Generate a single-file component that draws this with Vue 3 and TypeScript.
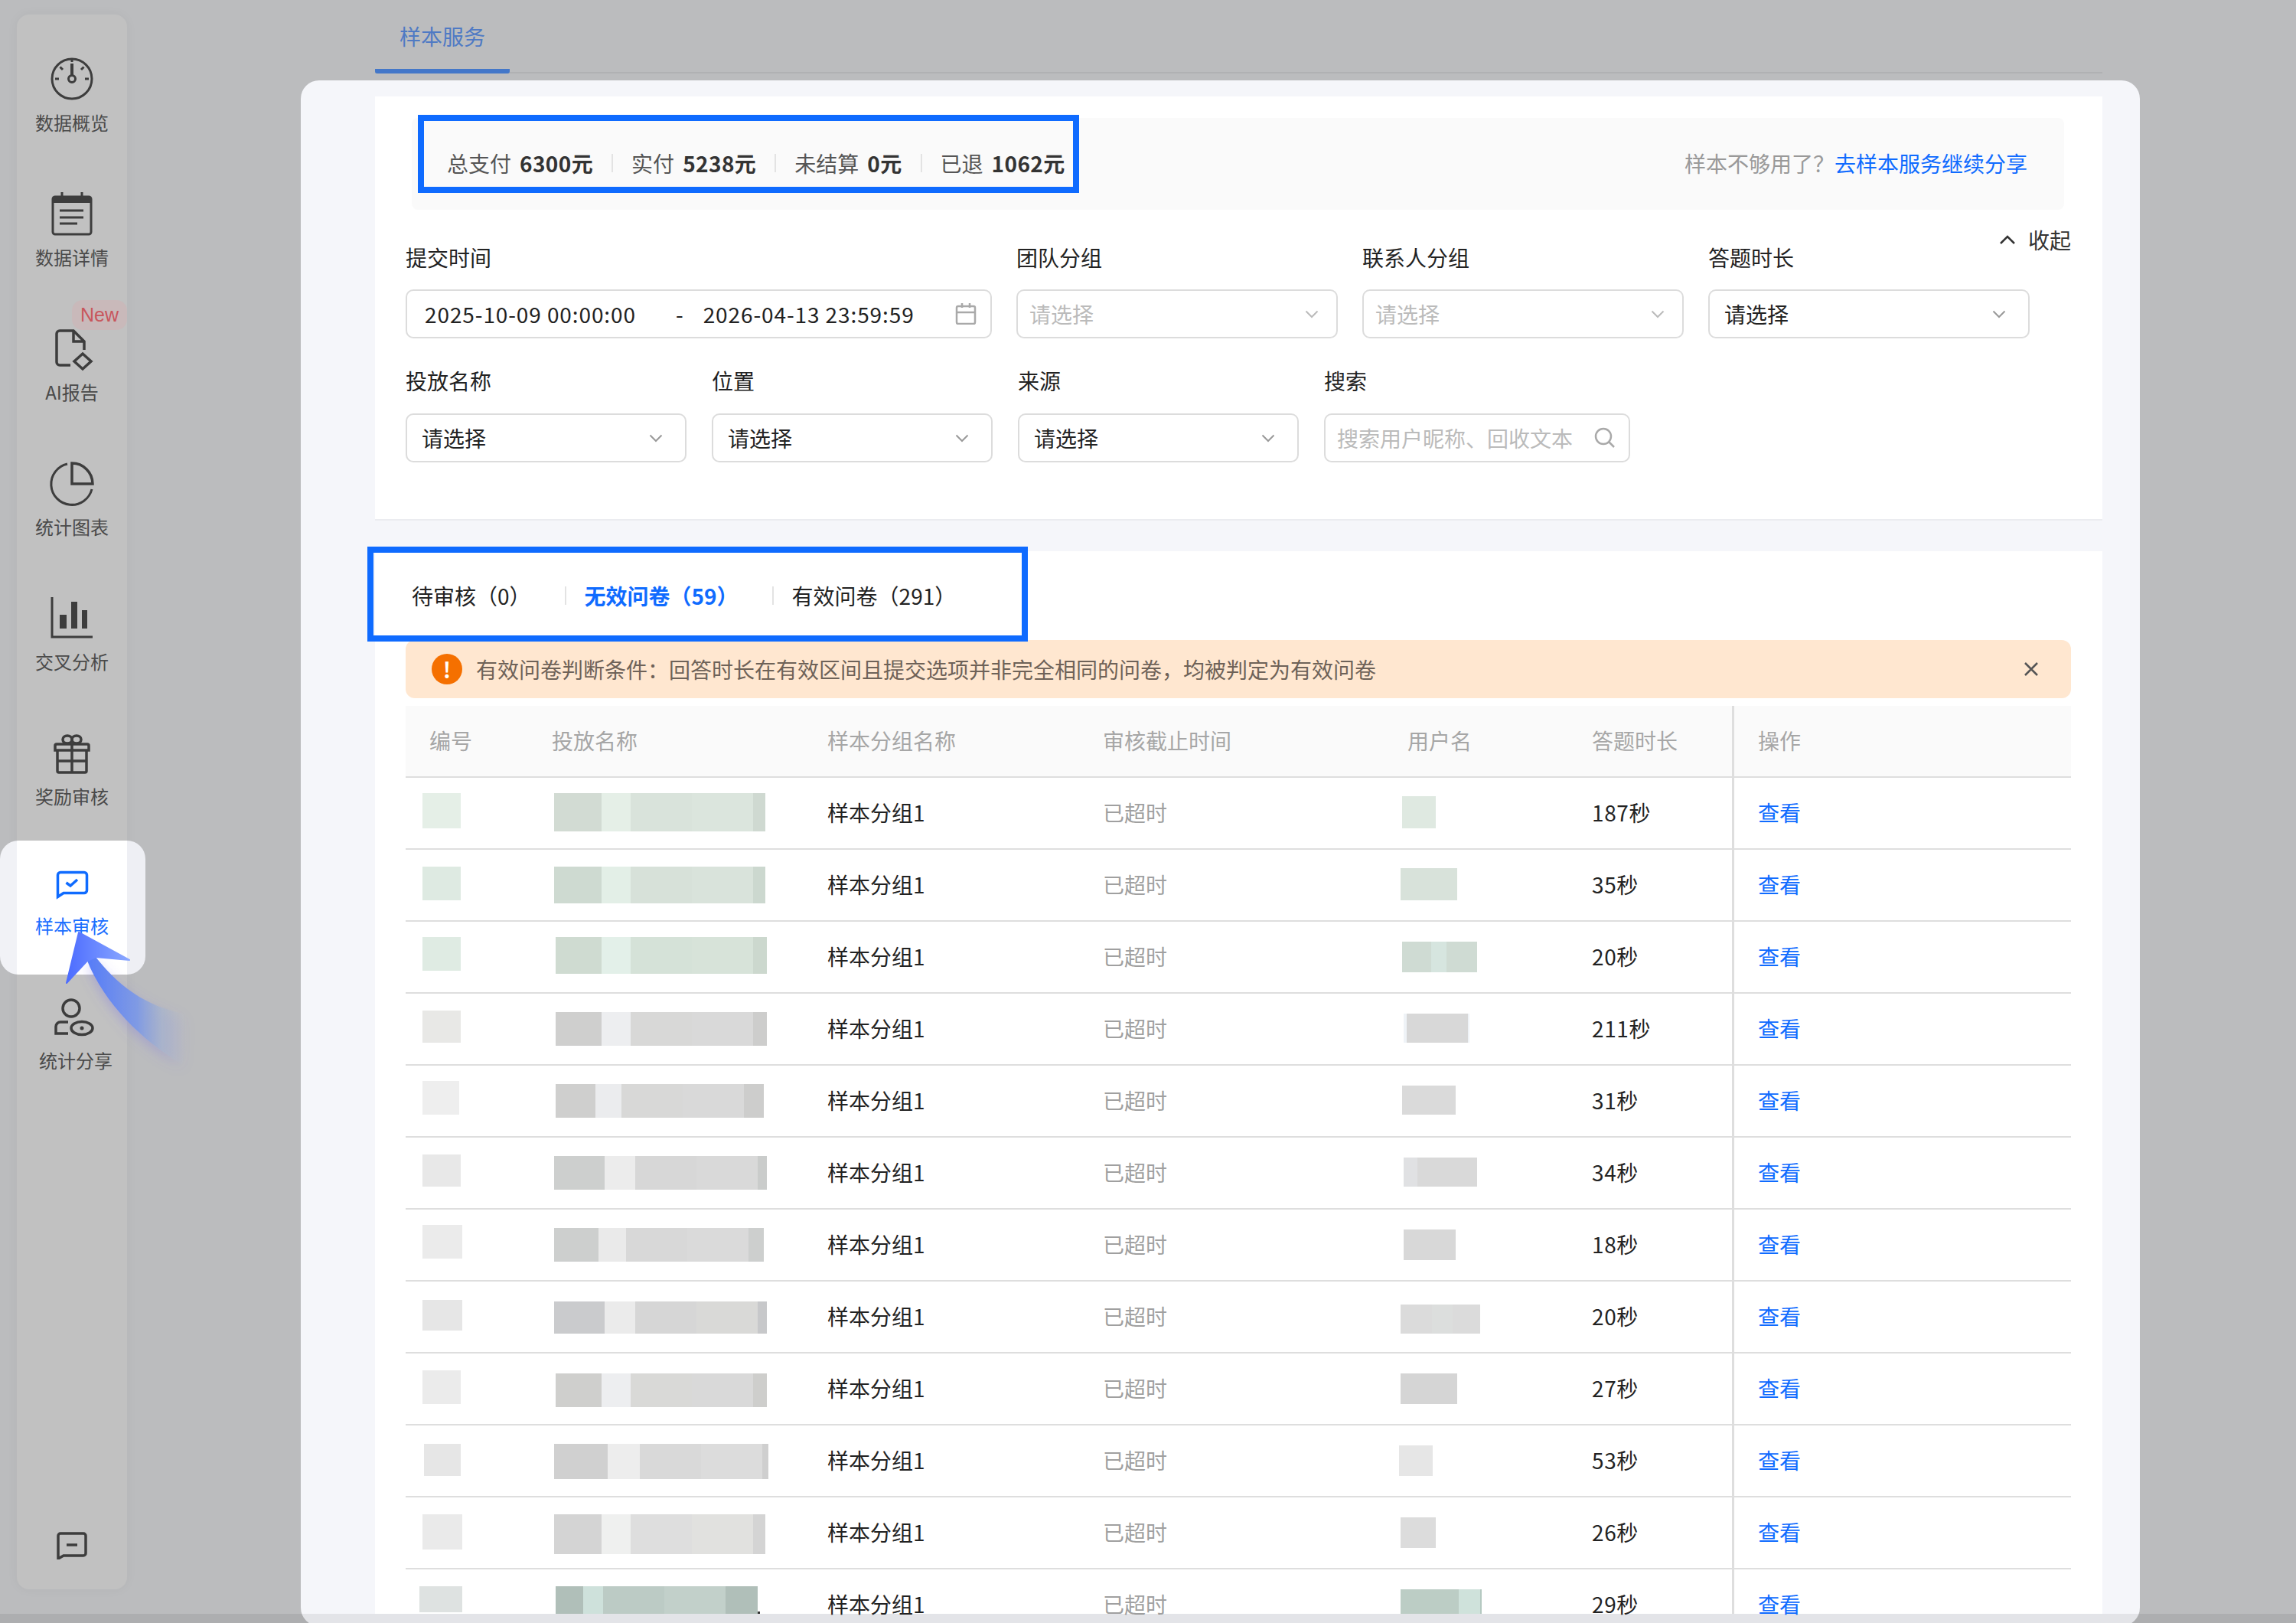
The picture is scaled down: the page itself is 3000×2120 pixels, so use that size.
<script setup lang="ts">
type Block = { ml: number; top: number; h: number; segs: [number, string][] }
type Row = { id: Block; name: Block; user: Block; time: string }

const block = (ml: number, top: number, h: number, ...segs: [number, string][]): Block => ({ ml, top, h, segs })
const five = (w: number[], c: string[]) => w.map((x, i) => [x, c[i]] as [number, string])

const rows: Row[] = [
  {
    id: block(22, 20, 46, [50, '#e5efe7']),
    name: block(35, 20, 50, ...five([62, 38, 80, 80, 16], ['#d2dbd3', '#e5efe7', '#d9e3db', '#dbe5dd', '#cfd9d1'])),
    user: block(24, 24, 42, [44, '#dfe9e1']),
    time: '187秒',
  },
  {
    id: block(22, 22, 44, [50, '#deeae2']),
    name: block(35, 22, 48, ...five([62, 38, 80, 80, 16], ['#cedad1', '#e3efe7', '#d7e1d9', '#d9e3db', '#ccd8cf'])),
    user: block(22, 24, 42, [74, '#d8e2da']),
    time: '35秒',
  },
  {
    id: block(22, 20, 44, [50, '#dfebe3']),
    name: block(37, 20, 48, ...five([60, 38, 80, 80, 18], ['#cfdbd1', '#e3f0e9', '#d5e2d8', '#d7e3d9', '#ccd8ce'])),
    user: block(24, 26, 40, [38, '#cfdbd3'], [20, '#d6e5df'], [40, '#cfdbd3']),
    time: '20秒',
  },
  {
    id: block(22, 22, 42, [50, '#e8e8e6']),
    name: block(37, 24, 44, ...five([60, 38, 80, 80, 18], ['#cfcfce', '#edeef0', '#d8d8d7', '#d9d9d9', '#cdcdcc'])),
    user: block(26, 26, 38, [4, '#eff3f7'], [80, '#d8d8d8'], [2, '#eff3f7']),
    time: '211秒',
  },
  {
    id: block(22, 20, 44, [48, '#eeeeee']),
    name: block(37, 24, 44, ...five([52, 34, 80, 80, 26], ['#cfcfce', '#ebecee', '#d8d8d7', '#d9d9d9', '#cdcdcc'])),
    user: block(24, 26, 38, [70, '#dadada']),
    time: '31秒',
  },
  {
    id: block(22, 22, 42, [50, '#e8e8e8']),
    name: block(35, 24, 44, ...five([66, 40, 80, 80, 12], ['#cdcfce', '#ececec', '#d7d7d7', '#d9d9d9', '#cacccb'])),
    user: block(26, 26, 38, [18, '#e0e1e3'], [78, '#d9d9d9']),
    time: '34秒',
  },
  {
    id: block(22, 20, 44, [52, '#ebebeb']),
    name: block(35, 24, 44, ...five([58, 36, 80, 80, 20], ['#cdcfce', '#eaeaea', '#d8d8d8', '#dadada', '#cdcfce'])),
    user: block(26, 26, 40, [68, '#d8d8d8']),
    time: '18秒',
  },
  {
    id: block(22, 24, 40, [52, '#e6e6e6']),
    name: block(35, 26, 42, ...five([66, 40, 80, 80, 12], ['#cacbcd', '#ebebeb', '#d6d6d6', '#d9d9d7', '#c7c8ca'])),
    user: block(22, 30, 38, [41, '#dbdbdb'], [27, '#dcdedd'], [36, '#dbdbdb']),
    time: '20秒',
  },
  {
    id: block(22, 22, 44, [50, '#ebebeb']),
    name: block(37, 26, 44, ...five([60, 38, 80, 80, 18], ['#cfcfcd', '#edeef0', '#d9d9d7', '#d9d9d9', '#cececc'])),
    user: block(22, 26, 40, [74, '#d5d5d5']),
    time: '27秒',
  },
  {
    id: block(24, 24, 42, [48, '#e6e6e6']),
    name: block(35, 24, 46, ...five([70, 42, 80, 80, 8], ['#d0d0d0', '#ededed', '#d9d9d9', '#dcdcdc', '#cfcfcf'])),
    user: block(20, 26, 40, [44, '#e6e6e6']),
    time: '53秒',
  },
  {
    id: block(22, 22, 46, [52, '#eaeaea']),
    name: block(35, 22, 52, ...five([62, 38, 80, 80, 16], ['#d4d4d4', '#eff0ef', '#dedede', '#e1e1df', '#d4d4d4'])),
    user: block(22, 26, 40, [46, '#dcdcdc']),
    time: '26秒',
  },
  {
    id: block(18, 22, 34, [56, '#dee2e1']),
    name: block(37, 22, 36, ...five([36, 26, 80, 80, 42], ['#b0bfb9', '#cee1db', '#bccbc5', '#c2d0ca', '#b0bfb9'])),
    user: block(22, 26, 32, [76, '#bccdc5'], [28, '#cfe2db'], [2, '#b5c9c1']),
    time: '29秒',
  },
]

const stats = [
  { label: '总支付', value: '6300元' },
  { label: '实付', value: '5238元' },
  { label: '未结算', value: '0元' },
  { label: '已退', value: '1062元' },
]

const firstRow = [
  { label: '团队分组', text: '请选择', empty: true },
  { label: '联系人分组', text: '请选择', empty: true },
  { label: '答题时长', text: '请选择', empty: false },
]

const secondRow = ['投放名称', '位置', '来源']
const heads = ['编号', '投放名称', '样本分组名称', '审核截止时间', '用户名', '答题时长', '操作']

const blockStyle = (b: Block) => ({
  marginLeft: b.ml + 'px',
  marginTop: b.top + 'px',
  height: b.h + 'px',
})
</script>

<template>
  <div class="page">
    <aside class="side">
      <div class="nav-item">
        <svg class="nav-icon" viewBox="0 0 56 56" fill="none" stroke="#3d3d3d" stroke-width="3">
          <circle cx="28" cy="28" r="26" />
          <path d="M6 28h5M45 28h5M12.500 12.500l3.500 3.500M43.500 12.500l-3.500 3.500M28 2v4" />
          <path d="M28 8v15" stroke-width="4" />
          <circle cx="28" cy="28" r="4.500" />
        </svg>
        <span>数据概览</span>
      </div>
      <div class="nav-item">
        <svg class="nav-icon" viewBox="0 0 56 56" fill="none" stroke="#3d3d3d" stroke-width="3">
          <rect x="3" y="6" width="50" height="49" rx="3" />
          <rect x="3" y="6" width="50" height="8" fill="#3d3d3d" stroke="none" />
          <path d="M15 0v9M41 0v9M12 24h31M12 33h31M12 41h23" />
        </svg>
        <span>数据详情</span>
      </div>
      <div class="nav-item">
        <em class="badge">New</em>
        <svg class="nav-icon" viewBox="0 0 56 56" fill="none" stroke="#3d3d3d" stroke-width="3.500">
          <path d="M26 50H12a4 4 0 0 1-4-4V9a4 4 0 0 1 4-4h18l14 14v11" />
          <path d="M30 5v14h14" />
          <path d="M42 35l11 10-11 10-11-10z" />
        </svg>
        <span>AI报告</span>
      </div>
      <div class="nav-item">
        <svg class="nav-icon" viewBox="0 0 56 56" fill="none" stroke="#3d3d3d" stroke-width="3.500">
          <path d="M22 3a27 27 0 1 0 32 33" stroke-width="3" />
          <path d="M28 2a27 27 0 0 1 27 27H28z" />
        </svg>
        <span>统计图表</span>
      </div>
      <div class="nav-item">
        <svg class="nav-icon" viewBox="0 0 56 56" fill="none" stroke="#3d3d3d" stroke-width="3">
          <path d="M2 1v52h53" />
          <path d="M12 24h9v18h-9zM27 7h8v35h-8zM41 18h7v24h-7z" fill="#3d3d3d" stroke="none" />
        </svg>
        <span>交叉分析</span>
      </div>
      <div class="nav-item">
        <svg class="nav-icon" viewBox="0 0 56 56" fill="none" stroke="#3d3d3d" stroke-width="3.500">
          <g transform="translate(0 3)">
            <ellipse cx="22" cy="8" rx="6" ry="5" />
            <ellipse cx="34" cy="8" rx="6" ry="5" />
            <path d="M6 22v-6a2 2 0 0 1 2-2h40a2 2 0 0 1 2 2v6z" />
            <path d="M9 22v27a2 2 0 0 0 2 2h34a2 2 0 0 0 2-2V22M28 14v37M9 36h38" />
          </g>
        </svg>
        <span>奖励审核</span>
      </div>
      <div class="nav-item active">
        <svg class="nav-icon" viewBox="0 0 56 56" fill="none" stroke="#0f6bff" stroke-width="3.500">
          <path d="M9.500 16a3.500 3.500 0 0 1 3.500-3.500h31a3.500 3.500 0 0 1 3.500 3.500v20a3.500 3.500 0 0 1-3.500 3.500H17l-7.500 5z" />
          <path d="M20.500 26l5.500 4 9-8" />
        </svg>
        <span>样本审核</span>
      </div>
      <div class="nav-item share">
        <svg class="nav-icon" viewBox="0 0 56 56" fill="none" stroke="#3d3d3d" stroke-width="3.500">
          <circle cx="22" cy="17" r="11" />
          <path d="M18 35H8a6 6 0 0 0-6 6v9h16" />
          <ellipse cx="36" cy="43" rx="14" ry="8.500" />
          <circle cx="36" cy="43" r="2.500" fill="#3d3d3d" stroke="none" />
        </svg>
        <span>统计分享</span>
      </div>
      <svg class="feedback" viewBox="0 0 40 36" fill="none" stroke="#3d3d3d" stroke-width="3.500">
        <path d="M2 5a3 3 0 0 1 3-3h30a3 3 0 0 1 3 3v23a3 3 0 0 1-3 3H9l-7 4z" />
        <path d="M13 17h14" />
      </svg>
    </aside>

    <main class="main">
      <div class="tabbar">
        <div class="tab">样本服务</div>
      </div>

      <div class="card">
        <section class="panel-top">
          <div class="stats">
            <div class="stat-list">
              <template v-for="(s, i) in stats" :key="s.label">
                <i v-if="i > 0" class="stat-sep"></i>
                <span class="stat-label">{{ s.label }}</span>
                <b class="stat-value">{{ s.value }}</b>
              </template>
              <div class="mark mark-stats"></div>
            </div>
            <div class="more">样本不够用了？<a>去样本服务继续分享</a></div>
          </div>

          <button class="fold">
            <svg width="22" height="14" viewBox="0 0 22 14" fill="none" stroke="#333" stroke-width="2.500"><path d="M2 12l9-9 9 9" /></svg>
            收起
          </button>

          <div class="filters">
            <div class="field field-date">
              <label>提交时间</label>
              <div class="control date">
                <span class="date-from">2025-10-09 00:00:00</span>
                <span class="date-dash">-</span>
                <span class="date-to">2026-04-13 23:59:59</span>
                <svg class="cal" width="28" height="28" viewBox="0 0 28 28" fill="none" stroke="#a9a9a9" stroke-width="2.500">
                  <rect x="2" y="4" width="24" height="23" rx="2" />
                  <path d="M2 12h24M9 0v6M19 0v6" />
                </svg>
              </div>
            </div>
            <div v-for="f in firstRow" :key="f.label" class="field field-select">
              <label>{{ f.label }}</label>
              <div class="control select" :class="{ empty: f.empty }">
                <span>{{ f.text }}</span>
                <svg width="18" height="11" viewBox="0 0 18 11" fill="none" stroke-width="2"><path d="M1.500 1.500L9 9l7.500-7.500" /></svg>
              </div>
            </div>
          </div>

          <div class="filters second">
            <div v-for="l in secondRow" :key="l" class="field field-small">
              <label>{{ l }}</label>
              <div class="control select">
                <span>请选择</span>
                <svg width="18" height="11" viewBox="0 0 18 11" fill="none" stroke-width="2"><path d="M1.500 1.500L9 9l7.500-7.500" /></svg>
              </div>
            </div>
            <div class="field field-search">
              <label>搜索</label>
              <div class="control search">
                <span>搜索用户昵称、回收文本</span>
                <svg width="28" height="28" viewBox="0 0 28 28" fill="none" stroke="#a9a9a9" stroke-width="2.500">
                  <circle cx="12" cy="12" r="10" />
                  <path d="M19 19l7 7" />
                </svg>
              </div>
            </div>
          </div>
        </section>

        <section class="panel-list">
          <div class="status-tabs">
            <span class="status">待审核（0）</span>
            <i class="status-sep"></i>
            <span class="status on">无效问卷（59）</span>
            <i class="status-sep"></i>
            <span class="status">有效问卷（291）</span>
            <div class="mark mark-status"></div>
          </div>

          <div class="alert">
            <span class="alert-dot">!</span>
            <span class="alert-text">有效问卷判断条件：回答时长在有效区间且提交选项并非完全相同的问卷，均被判定为有效问卷</span>
            <svg class="alert-close" width="20" height="20" viewBox="0 0 20 20" fill="none" stroke="#555" stroke-width="2.500"><path d="M2 2l16 16M18 2L2 18" /></svg>
          </div>

          <div class="table">
            <div class="tr thead">
              <div v-for="h in heads" :key="h" class="td">{{ h }}</div>
            </div>
            <div v-for="(r, i) in rows" :key="i" class="tr">
              <div class="td">
                <div class="mosaic" :style="blockStyle(r.id)">
                  <i v-for="(s, n) in r.id.segs" :key="n" :style="{ width: s[0] + 'px', background: s[1] }"></i>
                </div>
              </div>
              <div class="td">
                <div class="mosaic" :style="blockStyle(r.name)">
                  <i v-for="(s, n) in r.name.segs" :key="n" :style="{ width: s[0] + 'px', background: s[1] }"></i>
                </div>
                <span v-if="i === rows.length - 1" class="tail-dot"></span>
              </div>
              <div class="td text">样本分组1</div>
              <div class="td text muted">已超时</div>
              <div class="td">
                <div class="mosaic" :style="blockStyle(r.user)">
                  <i v-for="(s, n) in r.user.segs" :key="n" :style="{ width: s[0] + 'px', background: s[1] }"></i>
                </div>
              </div>
              <div class="td text num">{{ r.time }}</div>
              <div class="td text link">查看</div>
            </div>
          </div>
        </section>
      </div>
    </main>

    <svg class="guide" width="270" height="210" viewBox="0 0 270 210" fill="none">
      <defs>
        <linearGradient id="guide-head" x1="87" y1="0" x2="169" y2="0" gradientUnits="userSpaceOnUse">
          <stop offset="0" stop-color="#4c6cff" />
          <stop offset="1" stop-color="#8ba8ff" />
        </linearGradient>
        <linearGradient id="guide-tail" x1="114" y1="0" x2="244" y2="0" gradientUnits="userSpaceOnUse">
          <stop offset="0" stop-color="#567cf8" />
          <stop offset="0.5" stop-color="#7f9ae4" />
          <stop offset="0.75" stop-color="#a7b4cc" stop-opacity="0.75" />
          <stop offset="1" stop-color="#b4b9c6" stop-opacity="0" />
        </linearGradient>
        <filter id="guide-glow" x="-30%" y="-30%" width="160%" height="160%">
          <feDropShadow dx="0" dy="6" stdDeviation="8" flood-color="#6a5ff0" flood-opacity="0.3" />
        </filter>
      </defs>
      <path d="M114 55C136 110 186 160 238 190L250 126C200 118 160 95 125 50z" fill="url(#guide-tail)" filter="url(#guide-glow)" />
      <path d="M103 18L169 54 125 50 114 55 87 84z" fill="url(#guide-head)" stroke="url(#guide-head)" stroke-width="2" stroke-linejoin="round" />
    </svg>

    <div class="bottom-band"></div>
  </div>
</template>

<style scoped>
.page {
  position: relative;
  display: flex;
  width: 3000px;
  height: 2120px;
  overflow: hidden;
  background: #bbbcbe;
  font-family: "Noto Sans CJK SC", "Noto Sans", sans-serif;
  font-size: 28px;
  color: #222;
}

.side {
  display: flex;
  flex-direction: column;
  flex: none;
  box-sizing: border-box;
  width: 144px;
  height: 2057px;
  margin: 19px 0 0 22px;
  padding: 56px 0 39px;
  border-radius: 16px;
  background: #c1c1c1;
  box-shadow: 0 0 16px rgba(0, 0, 0, 0.04);
}

.nav-item {
  position: relative;
  z-index: 1;
  display: flex;
  flex-direction: column;
  align-items: center;
  gap: 11px;
  flex: none;
  height: 176px;
  font-size: 24px;
  line-height: 36px;
  color: #4a4a4a;
}

.nav-icon {
  display: block;
  width: 56px;
  height: 56px;
  overflow: visible;
}

.nav-item.active {
  gap: 8px;
  height: 173px;
  margin-top: -4px;
  color: #1b6fff;
}

.nav-item.active::before {
  content: "";
  position: absolute;
  top: -29px;
  left: -22px;
  z-index: -1;
  width: 190px;
  height: 175px;
  border-radius: 24px;
  background: linear-gradient(to right, #f1f2f6 22px, #fff 22px, #fff 166px, #eeeff4 166px);
}

.nav-item.share {
  left: 5px;
}

.badge {
  position: absolute;
  top: -35px;
  right: 0;
  width: 72px;
  height: 39px;
  border-radius: 14px;
  background: #c9b9ba;
  font-family: "Liberation Sans", sans-serif;
  font-size: 25px;
  font-style: normal;
  line-height: 39px;
  text-align: center;
  color: #c8565c;
}

.feedback {
  display: block;
  width: 40px;
  height: 36px;
  margin: auto 0 0 52px;
}

.main {
  display: flex;
  flex-direction: column;
  flex: none;
  width: 2403px;
  margin-left: 227px;
}

.tabbar {
  box-sizing: border-box;
  height: 96px;
  margin: 0 49px 9px 97px;
  border-bottom: 2px solid #b0b1b3;
}

.tab {
  box-sizing: border-box;
  width: 176px;
  height: 96px;
  padding-left: 32px;
  border-bottom: 6px solid #4377c9;
  border-radius: 0 0 3px 3px;
  line-height: 94px;
  color: #4f7ac4;
}

.card {
  display: flex;
  flex-direction: column;
  box-sizing: border-box;
  height: 2019px;
  padding: 21px 49px 16px 97px;
  border-radius: 24px;
  background: #f5f6fa;
}

.panel-top {
  position: relative;
  flex: none;
  box-sizing: border-box;
  height: 554px;
  padding: 28px 50px 0 48px;
  border-bottom: 2px solid #ebecf0;
  background: #fff;
}

.stats {
  display: flex;
  align-items: center;
  justify-content: space-between;
  box-sizing: border-box;
  height: 120px;
  padding: 0 48px 3px 46px;
  border-radius: 8px;
  background: #fafafa;
}

.stat-list {
  display: flex;
  align-items: center;
  line-height: 40px;
  color: #555;
}

.stat-value {
  margin: 0 24px 0 11px;
  font-weight: 700;
  letter-spacing: 0.4px;
  color: #333;
}

.stat-sep {
  width: 2px;
  height: 24px;
  margin-right: 24px;
  background: #e3e3e3;
}

.mark {
  position: absolute;
  box-sizing: border-box;
  border: 8px solid #0f6bff;
  pointer-events: none;
}

.mark-stats {
  top: 24px;
  left: 56px;
  width: 864px;
  height: 102px;
}

.more {
  color: #999;
}

.more a {
  color: #0f6bff;
}

.fold {
  position: absolute;
  top: 167px;
  right: 41px;
  display: flex;
  align-items: center;
  gap: 16px;
  padding: 0;
  border: 0;
  background: none;
  font: inherit;
  line-height: 40px;
  color: #333;
}

.filters {
  display: flex;
  gap: 32px;
  margin: 43px 0 0 -8px;
}

.filters.second {
  gap: 33px;
  margin-top: 36px;
}

.field label {
  display: block;
  height: 40px;
  margin-bottom: 21px;
  line-height: 38px;
  color: #222;
}

.second .field label {
  margin-bottom: 22px;
}

.field-date {
  width: 766px;
}

.field-select {
  width: 420px;
}

.field-small {
  width: 367px;
}

.field-search {
  width: 400px;
}

.control {
  display: flex;
  align-items: center;
  box-sizing: border-box;
  height: 64px;
  border: 2px solid #dcdcdc;
  border-radius: 10px;
  background: #fff;
  line-height: 40px;
}

.date {
  padding: 0 18px 0 23px;
}

.date-from,
.date-to {
  letter-spacing: 0.9px;
}

.date-dash {
  margin: 0 26px 0 52px;
}

.cal {
  margin-left: auto;
}

.select {
  justify-content: space-between;
  padding: 0 29px 0 19px;
}

.select svg {
  stroke: #999;
}

.select.empty {
  padding: 0 23px 0 15px;
  color: #bbb;
}

.select.empty svg {
  stroke: #bbb;
}

.search {
  justify-content: space-between;
  padding: 0 17px 0 15px;
  color: #bbb;
}

.panel-list {
  display: flex;
  flex-direction: column;
  flex: 1;
  min-height: 0;
  margin-top: 40px;
  padding: 0 41px 0 40px;
  background: #fff;
}

.status-tabs {
  position: relative;
  display: flex;
  align-items: center;
  flex: none;
  height: 116px;
  padding-left: 8px;
}

.status {
  margin-right: 44px;
  line-height: 38px;
  color: #222;
}

.status.on {
  font-weight: 700;
  color: #0f6bff;
}

.status-sep {
  width: 2px;
  height: 24px;
  margin-right: 24px;
  background: #e3e3e3;
}

.mark-status {
  top: -6px;
  left: -50px;
  width: 863px;
  height: 124px;
}

.alert {
  display: flex;
  align-items: center;
  flex: none;
  height: 76px;
  padding: 0 42px 0 34px;
  border-radius: 12px;
  background: #ffe7d0;
  color: #6e6258;
}

.alert-dot {
  flex: none;
  width: 40px;
  height: 40px;
  margin-right: 18px;
  border-radius: 50%;
  background: #f57000;
  font-weight: 700;
  font-size: 28px;
  line-height: 40px;
  text-align: center;
  color: #fff;
}

.alert-close {
  margin-left: auto;
}

.table {
  flex: 1;
  min-height: 0;
  margin-top: 10px;
}

.tr {
  display: grid;
  grid-template-columns: 159px 361px 360px 398px 241px 214px 443px;
  box-sizing: border-box;
  height: 94px;
  border-bottom: 2px solid #dedede;
}

.tr:last-child {
  height: 58px;
  border-bottom: 0;
}

.td {
  display: flex;
  align-items: flex-start;
  box-sizing: border-box;
  min-width: 0;
  height: 94px;
}

.td:last-child {
  border-left: 3px solid #dedede;
}

.tr:last-child .td {
  height: 58px;
}

.thead .td {
  align-items: center;
  height: 92px;
  padding: 0 0 2px 31px;
  color: #a6a6a6;
}

.thead {
  background: #fafafa;
}

.thead .td:nth-child(2) {
  padding-left: 32px;
}

.text {
  align-items: center;
  height: 92px;
  padding: 0 0 2px 31px;
  line-height: 24px;
}

.tr:last-child .text {
  align-items: flex-start;
  padding: 33px 0 0 31px;
}

.thead .td:last-child,
.text:last-child {
  padding-left: 31px;
}

.muted {
  color: #a0a0a0;
}

.num {
  letter-spacing: 0.6px;
}

.link {
  color: #0f6bff;
}

.mosaic {
  display: flex;
  flex: none;
}

.mosaic i {
  display: block;
  height: 100%;
}

.tail-dot {
  flex: none;
  width: 3px;
  height: 3px;
  margin-top: 55px;
  background: #333;
}

.guide {
  position: absolute;
  top: 1200px;
  left: 0;
  z-index: 2;
  overflow: visible;
}

.bottom-band {
  position: absolute;
  right: 0;
  bottom: 0;
  left: 0;
  z-index: 3;
  height: 12px;
  background: rgba(0, 0, 0, 0.07);
}
</style>

<style>
body {
  margin: 0;
  overflow: hidden;
}
</style>
